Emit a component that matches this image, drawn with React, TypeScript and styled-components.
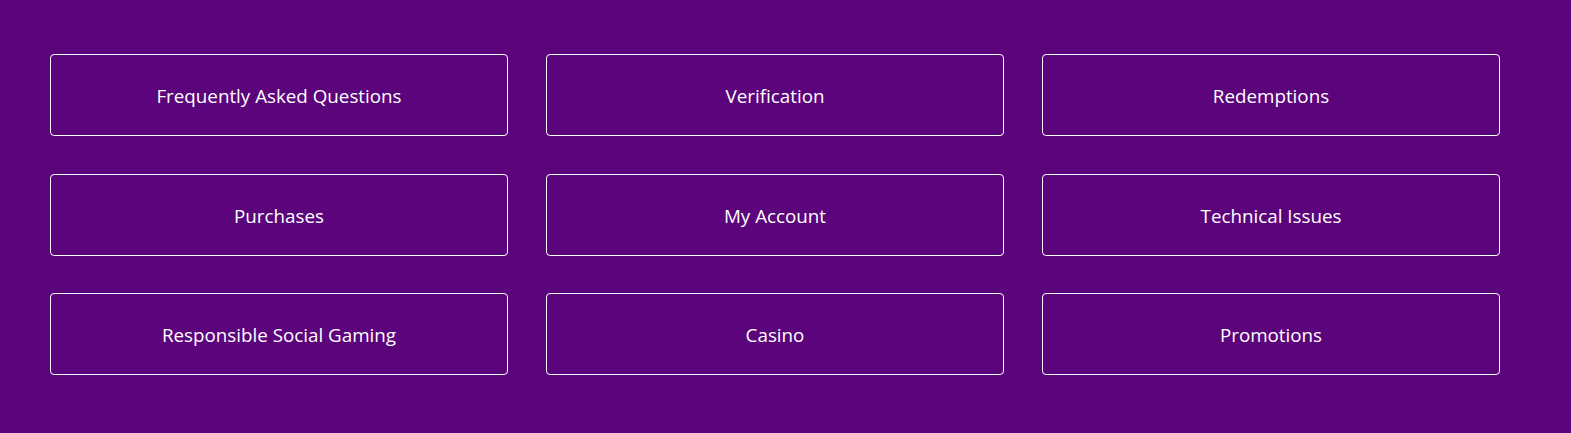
import React from "react";
import styled, { createGlobalStyle } from "styled-components";

const Global = createGlobalStyle`
  html, body { margin: 0; padding: 0; background: #5b047c; }
  body { font-family: "Open Sans", "Noto Sans", sans-serif; }
`;

const Page = styled.div`
  background: #5b047c;
  min-height: 433px;
  box-sizing: border-box;
  padding: 54px 71px 59px 50px;
`;

const Grid = styled.div`
  display: grid;
  grid-template-columns: repeat(3, 458px);
  grid-auto-rows: 82px;
  column-gap: 38px;
  row-gap: 37.5px;
`;

const Tile = styled.a`
  display: flex;
  align-items: center;
  justify-content: center;
  padding-top: 2px;
  box-sizing: border-box;
  border: 1px solid #ffffff;
  border-radius: 4px;
  color: #ffffff;
  font-size: 18.8px;
  text-decoration: none;
  cursor: pointer;
`;

const items = [
  "Frequently Asked Questions",
  "Verification",
  "Redemptions",
  "Purchases",
  "My Account",
  "Technical Issues",
  "Responsible Social Gaming",
  "Casino",
  "Promotions",
];

export default function App() {
  return (
    <>
      <Global />
      <Page>
        <Grid>
          {items.map((t) => (
            <Tile key={t}>{t}</Tile>
          ))}
        </Grid>
      </Page>
    </>
  );
}
